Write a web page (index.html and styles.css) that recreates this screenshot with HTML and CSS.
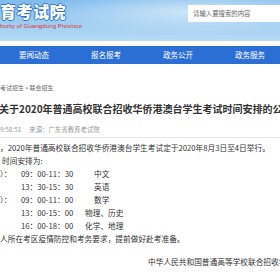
FILE: index.html
```html
<!DOCTYPE html>
<html lang="zh-CN">
<head>
    <meta charset="UTF-8">
    <meta name="viewport" content="width=device-width, initial-scale=1.0">
    <title>广东省教育考试院</title>
    <link rel="stylesheet" href="styles.css">
</head>
<body>
    <header class="top">
        <div class="brand">
            <div class="brand-name">育考试院</div>
            <div class="brand-en">hority of Guangdong Province</div>
        </div>
        <div class="search">请输入要搜索的内容</div>
    </header>

    <nav class="nav">
        <a href="#">要闻动态</a>
        <a href="#">报名报考</a>
        <a href="#">政务公开</a>
        <a href="#">政务服务</a>
    </nav>

    <!-- article -->
    <div class="crumb">考试招生 » 联合招生</div>
    <h1 class="title">关于2020年普通高校联合招收华侨港澳台学生考试时间安排的公告</h1>
    <div class="meta">
        <span>9:58:51</span>
        <span>来源：广东省教育考试院</span>
    </div>
    <div class="content">
        <p>，2020年普通高校联合招收华侨港澳台学生考试定于2020年8月3日至4日举行。</p>
        <p class="indent">时间安排为:</p>
        <div class="row"><span class="day">）：</span><span class="time">09：00-11：30</span><span class="subj">中文</span></div>
        <div class="row"><span class="day"></span><span class="time">13：30-15：30</span><span class="subj">英语</span></div>
        <div class="row"><span class="day">）：</span><span class="time">09：00-11：00</span><span class="subj">数学</span></div>
        <div class="row"><span class="day"></span><span class="time">13：00-15：00</span><span class="subj wide">物理、历史</span></div>
        <div class="row"><span class="day"></span><span class="time">16：00-18：00</span><span class="subj wide">化学、地理</span></div>
        <p>人所在考区疫情防控和考务要求，提前做好赴考准备。</p>
        <p class="sign">中华人民共和国普通高等学校联合招收华侨港澳台学生办公室</p>
    </div>
</body>
</html>
```

FILE: styles.css
```css
body {
    font-family: "Noto Sans CJK SC", "Noto Sans", sans-serif;
    margin: 0;
    padding: 0;
    background-color: white;
    color: #333;
    overflow: hidden;
    white-space: nowrap;
}

.top {
    height: 41px;
    display: flex;
    justify-content: space-between;
    background: radial-gradient(ellipse at 70% 30%, #cfe6f8 0%, rgba(207, 230, 248, 0) 55%),
        linear-gradient(to bottom, #7fbbec, #b7dbf5);
}

.brand {
    padding-top: 2px;
}

.brand-name {
    color: white;
    font-size: 16px;
    font-weight: 900;
    line-height: 19px;
    letter-spacing: 0.5px;
    text-shadow: 1px 0 0 #2d78c8, -1px 0 0 #2d78c8, 0 1px 0 #2d78c8, 0 -1px 0 #2d78c8;
}

.brand-en {
    color: #d8343a;
    font-family: "Liberation Sans", sans-serif;
    font-size: 6.2px;
    line-height: 8px;
    margin-top: 1px;
}

.search {
    width: 92px;
    height: 17px;
    margin-top: 5px;
    background-color: white;
    color: #666;
    font-size: 6.4px;
    line-height: 17px;
    padding-left: 5px;
    box-sizing: border-box;
}

.nav {
    display: grid;
    grid-template-columns: repeat(4, 72px);
    margin: 5px 0 0 -2px;
    height: 18px;
    background-color: #2b6fd4;
}

.nav a {
    text-align: center;
    color: white;
    text-decoration: none;
    font-size: 7.5px;
    line-height: 18px;
}

.crumb {
    margin-top: 19px;
    font-size: 6px;
    line-height: 10px;
    color: #666;
}

.title {
    margin: 8px 0 0 -1px;
    font-size: 10px;
    line-height: 16px;
    font-weight: bold;
    color: #333;
}

.meta {
    margin-top: 8px;
    font-size: 6.4px;
    line-height: 10px;
    color: #999;
    display: flex;
    gap: 8px;
    padding-bottom: 2px;
    border-bottom: 1px solid #e8e8e8;
}

.content {
    padding-top: 3px;
    font-size: 7.7px;
    line-height: 13px;
}

.content p {
    margin: 0;
}

.indent {
    padding-left: 2px;
}

.row {
    display: flex;
}

.day {
    width: 21px;
}

.time {
    width: 73px;
}

.subj.wide {
    margin-left: -9px;
}

.content .sign {
    margin-top: 10px;
    padding-left: 148px;
}
```
